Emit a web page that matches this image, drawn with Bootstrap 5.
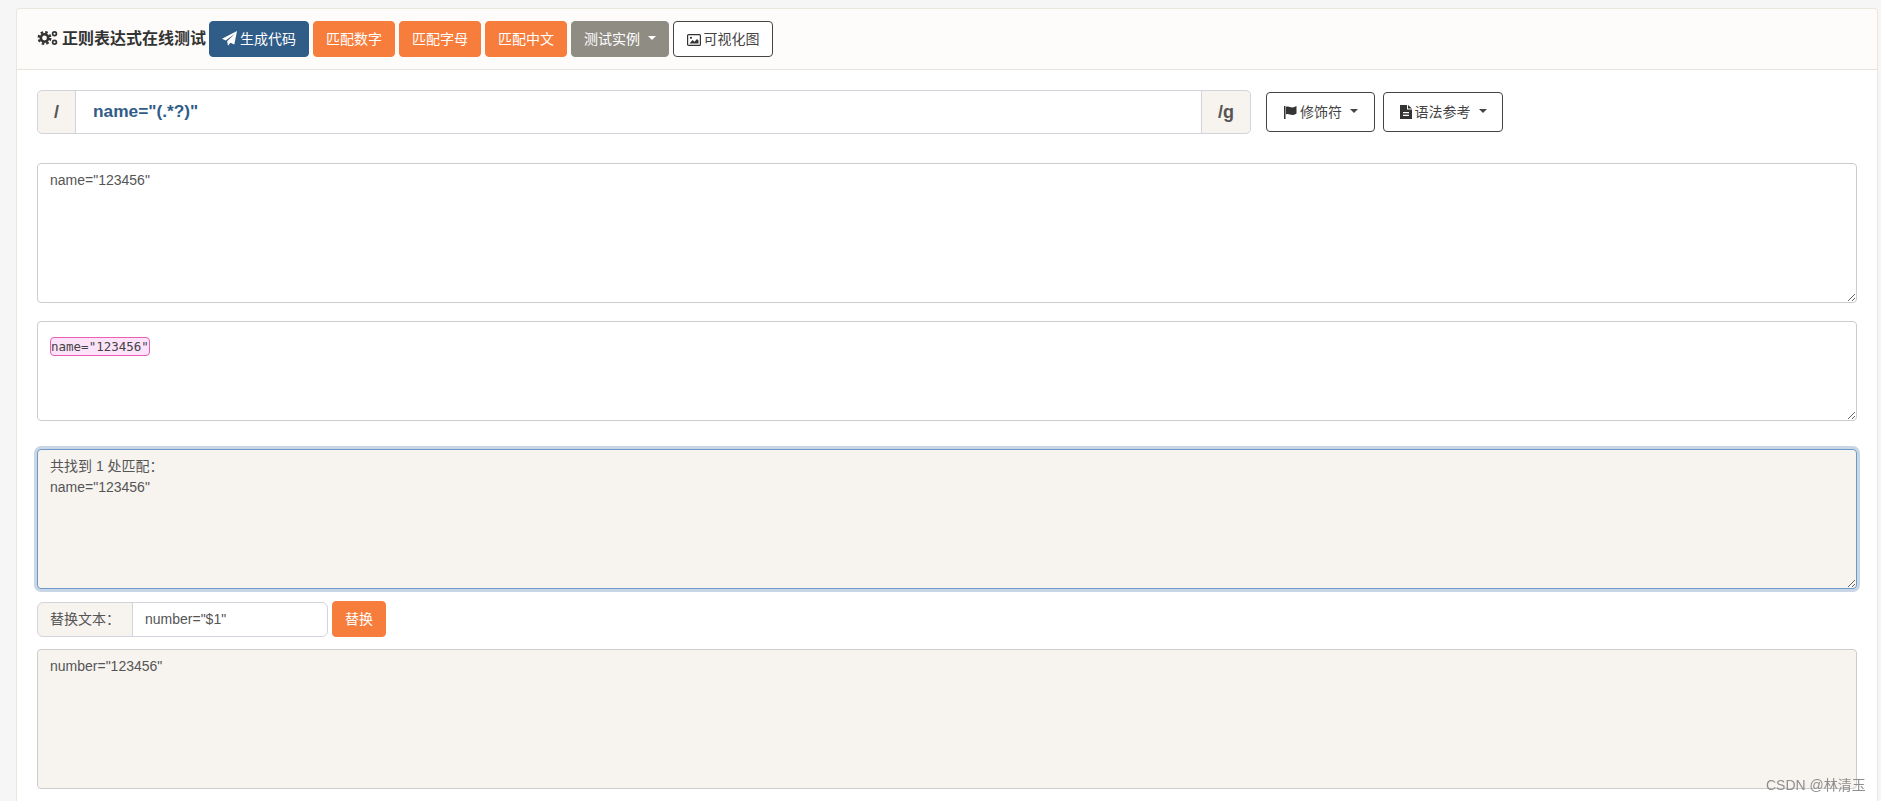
<!DOCTYPE html>
<html lang="zh-CN">
<head>
<meta charset="utf-8">
<title>正则表达式在线测试</title>
<link rel="stylesheet" href="https://cdn.jsdelivr.net/npm/bootstrap@5.3.0/dist/css/bootstrap.min.css">
<style>
html,body{height:801px;overflow:hidden}
body{background:#f6f6f6;font-family:"Liberation Sans","Noto Sans CJK SC",sans-serif;font-size:14px;color:#555}
.tool-card{margin:8px 3px 0 16px;border:1px solid #ebe6de;border-bottom:0;border-radius:4px 4px 0 0;background:#fff;height:793px;overflow:hidden}
.tool-head{height:61px;background:#fdfcfa;border-bottom:1px solid #e8e4dc;padding:0 0 0 20px;gap:4px;border-radius:4px 4px 0 0}
.tool-title{font-size:16px;font-weight:700;color:#333;line-height:22px;margin-right:-1px;white-space:nowrap}
.tool-title svg{margin-right:4px;vertical-align:-2px}
.tool-body{padding:20px 20px 0 20px}
.tbtn{height:36px;padding:0 12px;font-size:14px;line-height:34px;border-radius:4px;white-space:nowrap;--bs-btn-padding-y:0}
.tbtn svg{vertical-align:-2px;margin-right:3px}
.tbtn-navy{background:#305c88;border-color:#305c88;color:#fff;width:100px;padding:0}
.tbtn-orange{background:#f77d3c;border-color:#f77d3c;color:#fff;width:82px;padding:0}
.tbtn-gray{background:#8f8c84;border-color:#8f8c84;color:#fff;width:98px;padding:0}
.tbtn-line{background:#fff;border-color:#444;color:#444;width:100px;padding:0}
.tbtn-opt{height:40px;line-height:38px;padding:0;background:#fff;border-color:#444;color:#444}
.tbtn-flag{width:109px}
.tbtn-doc{width:120px}
.re-group{width:1214px;height:44px}
.re-add{background:#f7f4f0;border-color:#d3d3dc;font-size:18px;font-weight:700;color:#555;justify-content:center;padding:0;border-radius:5px}
.re-add-left{width:39px}
.re-add-right{width:50px}
.re-input{font-size:17.3px;font-weight:700;color:#305c88;border-color:#d3d3dc;padding:0 17px}
.opts{gap:8px;margin-left:15px}
.area{display:block;width:100%;font-size:14px;line-height:21px;color:#555;border:1px solid #ccc;border-radius:4px;padding:6px 12px;box-shadow:none;background:#fff;font-family:"Liberation Sans","Noto Sans CJK SC",sans-serif}
.area:focus{box-shadow:none;border-color:#ccc}
.area-a{height:140px;margin-top:29px;resize:vertical}
.area-b{height:100px;margin-top:18px;resize:vertical;overflow:auto;padding-top:14px}
.area-c{height:140px;margin-top:28px;background:#f7f4f0;border-color:#6d9bc9;box-shadow:0 0 0 3px #c9d6e6;resize:vertical}
.area-c:focus{background:#f7f4f0;border-color:#6d9bc9;box-shadow:0 0 0 3px #c9d6e6;color:#555}
.area-d{height:140px;margin-top:12px;background:#f7f4f0;resize:none}
.area-d:focus{background:#f7f4f0}
.hit{display:inline-block;font-family:"DejaVu Sans Mono",monospace;font-size:12.5px;line-height:17px;background:#fde3fa;border:1px solid #e85fb4;border-radius:4px;padding:0;color:#444}
.rep-row{margin-top:12px;gap:4px;height:36px}
.rep-group{width:291px;height:35px;margin-top:1px}
.rep-add{background:#f7f4f0;border-color:#d3d3dc;color:#555;font-size:14px;padding:0 12px;width:96px}
.rep-input{font-size:14px;color:#555;border-color:#d3d3dc;padding:0 12px}
.tbtn-rep{width:54px;background:#f77d3c;border-color:#f77d3c;color:#fff;padding:0}
.mark-wm{position:fixed;left:1766px;top:775px;font-size:14px;line-height:20px;color:#8e8e8e;white-space:nowrap}
.caret-own::after{margin-left:8px}
</style>
</head>
<body>
<div class="tool-card">
  <div class="tool-head d-flex align-items-center">
    <span class="tool-title"><svg width="21" height="16" viewBox="0 0 21 16" fill="none" stroke="#333"><circle cx="7.500" cy="8" r="5.800" stroke-width="2.400" stroke-dasharray="2.500 2.060"/><circle cx="7.500" cy="8" r="3.700" stroke-width="2.600"/><circle cx="17.500" cy="3.800" r="1.900" stroke-width="1.700"/><circle cx="17.500" cy="12.200" r="1.900" stroke-width="1.700"/></svg>正则表达式在线测试</span>
    <button type="button" class="btn tbtn tbtn-navy ms-0"><svg width="15" height="15" viewBox="0 0 14 14" fill="#fff"><path d="M14 0 11.500 12.500 7.800 10.900 5.600 13.800 4.800 9.600 12 2.500 3.400 8.800 0 7.300z"/></svg>生成代码</button>
    <button type="button" class="btn tbtn tbtn-orange">匹配数字</button>
    <button type="button" class="btn tbtn tbtn-orange">匹配字母</button>
    <button type="button" class="btn tbtn tbtn-orange">匹配中文</button>
    <button type="button" class="btn tbtn tbtn-gray dropdown-toggle caret-own">测试实例</button>
    <button type="button" class="btn tbtn tbtn-line"><svg width="14" height="12" viewBox="0 0 14 12"><rect x=".6" y=".6" width="12.800" height="10.800" rx="1" fill="none" stroke="#333" stroke-width="1.200"/><path d="M2.500 9.500 5.500 6l2 1.800L10 5l1.500 1.500v3z" fill="#333"/><circle cx="4" cy="3.800" r="1.100" fill="#333"/></svg>可视化图</button>
  </div>
  <div class="tool-body">
    <div class="d-flex align-items-center">
      <div class="input-group re-group">
        <span class="input-group-text re-add re-add-left">/</span>
        <input type="text" class="form-control re-input" value='name="(.*?)"'>
        <span class="input-group-text re-add re-add-right">/g</span>
      </div>
      <div class="d-flex opts">
        <button type="button" class="btn tbtn tbtn-opt tbtn-flag dropdown-toggle caret-own"><svg width="14" height="14" viewBox="0 0 14 14" fill="#333"><path d="M1 1h1.500v13H1zM3 2c2.500-1.400 4.500 1 7 .4 1.300-.3 2.500-.8 3.500-1.400v7.500c-1 .7-2.200 1.200-3.500 1.500-2.500.5-4.500-1.900-7-.5z"/></svg>修饰符</button>
        <button type="button" class="btn tbtn tbtn-opt tbtn-doc dropdown-toggle caret-own"><svg width="12" height="14" viewBox="0 0 12 14"><path d="M0 0h7v4.500h5V14H0z" fill="#333"/><path d="M8 0l4 3.500H8z" fill="#333"/><path d="M3 7h6v1.200H3zM3 9.800h6V11H3z" fill="#fff"/></svg>语法参考</button>
      </div>
    </div>
    <textarea class="form-control area area-a">name="123456"</textarea>
    <div class="area area-b"><span class="hit">name="123456"</span></div>
    <textarea class="form-control area area-c">共找到 1 处匹配：
name="123456"</textarea>
    <div class="d-flex rep-row">
      <div class="input-group rep-group">
        <span class="input-group-text rep-add">替换文本：</span>
        <input type="text" class="form-control rep-input" value='number="$1"'>
      </div>
      <button type="button" class="btn tbtn tbtn-rep ms-0">替换</button>
    </div>
    <textarea class="form-control area area-d">number="123456"</textarea>
  </div>
</div>
<div class="mark-wm">CSDN @林清玉</div>
</body>
</html>
